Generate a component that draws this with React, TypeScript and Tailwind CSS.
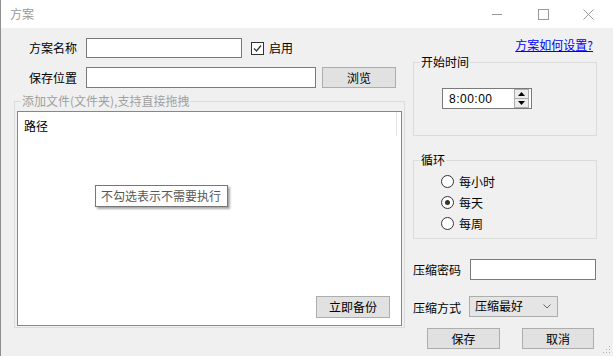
import React from 'react';

function GroupBox({ label, className, labelClass, children }: { label: string; className: string; labelClass?: string; children: React.ReactNode }) {
  return (
    <div className={`relative border border-[#dcdcdc] ${className}`}>
      <span className={`absolute top-[-9px] left-[6px] bg-[#f0f0f0] px-[1px] leading-[16px] ${labelClass ?? 'text-black'}`}>{label}</span>
      {children}
    </div>
  );
}

function Radio({ label, checked }: { label: string; checked?: boolean }) {
  return (
    <div className="flex items-center h-[21px]">
      <span className="w-[13px] h-[13px] rounded-full border border-[#333] bg-white flex items-center justify-center">
        {checked && <span className="w-[5px] h-[5px] rounded-full bg-[#333]" />}
      </span>
      <span className="ml-[5px]">{label}</span>
    </div>
  );
}

function WinButton({ label, className }: { label: string; className: string }) {
  return (
    <div className={`h-[21px] bg-[#e1e1e1] border border-[#adadad] flex items-center justify-center ${className}`}>{label}</div>
  );
}

export default function App() {
  return (
    <div className="relative w-[613px] h-[356px] bg-[#f0f0f0] border-l border-[#8f8f8f] flex flex-col text-[12px] leading-[16px] text-black font-['Noto_Sans_CJK_SC','Microsoft_YaHei',sans-serif] overflow-hidden">
      {/* Title bar */}
      <div className="h-[28px] bg-white flex items-center shrink-0">
        <span className="ml-[9px] text-[#999]">方案</span>
        <div className="ml-auto flex items-center text-[#999]">
          <svg width="10" height="10" viewBox="0 0 10 10" className="mr-[36px]">
            <line x1="0" y1="5.5" x2="10" y2="5.5" stroke="#999" strokeWidth="1" />
          </svg>
          <svg width="11" height="11" viewBox="0 0 11 11" className="mr-[34px]">
            <rect x="0.5" y="0.5" width="10" height="10" fill="none" stroke="#999" strokeWidth="1" />
          </svg>
          <svg width="11" height="11" viewBox="0 0 11 11" className="mr-[19px]">
            <line x1="0.5" y1="0.5" x2="10.5" y2="10.5" stroke="#999" strokeWidth="1" />
            <line x1="10.5" y1="0.5" x2="0.5" y2="10.5" stroke="#999" strokeWidth="1" />
          </svg>
        </div>
      </div>

      <div className="flex flex-1">
        {/* Left column */}
        <div className="w-[412px] pt-[10px] flex flex-col">
          <div className="flex items-center h-[20px] pl-[28px]">
            <span className="w-[57px]">方案名称</span>
            <div className="w-[156px] h-[20px] bg-white border border-[#7a7a7a]" />
            <span className="ml-[9px] w-[13px] h-[13px] border border-[#333] bg-white flex items-center justify-center">
              <svg width="11" height="11" viewBox="0 0 11 11">
                <polyline points="2,5.5 4.5,8 9,2.5" fill="none" stroke="#333" strokeWidth="1.2" />
              </svg>
            </span>
            <span className="ml-[5px]">启用</span>
          </div>
          <div className="flex items-center h-[21px] pl-[28px] mt-[9px]">
            <span className="w-[57px]">保存位置</span>
            <div className="w-[230px] h-[21px] bg-white border border-[#7a7a7a]" />
            <WinButton label="浏览" className="ml-[6px] w-[74px]" />
          </div>

          <GroupBox label="添加文件(文件夹),支持直接拖拽" labelClass="text-[#a0a0a0]" className="ml-[13px] mt-[13px] w-[391px] h-[227px] pt-[9px] px-[2px] pb-[1px] flex flex-col">
            <div className="relative flex-1 bg-white border border-[#828790] flex flex-col">
              <div className="flex h-[24px]">
                <div className="w-[379px] border-r border-[#e5e5e5] pl-[6px] pt-[6px] leading-[16px]">路径</div>
              </div>
              <div className="flex-1" />
              <div className="flex justify-end pr-[11px] pb-[7px]">
                <WinButton label="立即备份" className="w-[74px] h-[22px]" />
              </div>
              <div className="absolute left-[77px] top-[73px] w-[133px] h-[22px] bg-white border border-[#767676] shadow-[2px_2px_2px_rgba(0,0,0,0.35)] pl-[5px] flex items-center text-[#575757]">
                不勾选表示不需要执行
              </div>
            </div>
          </GroupBox>
        </div>

        {/* Right column */}
        <div className="w-[184px] pt-[10px] flex flex-col">
          <div className="h-[14px] leading-[14px] text-right pr-[4px]">
            <span className="text-[#0000ff] underline">方案如何设置?</span>
          </div>

          <GroupBox label="开始时间" className="mt-[10px] h-[74px] pt-[25px] pl-[28px]">
            <div className="w-[90px] h-[21px] bg-white border border-[#7a7a7a] flex items-center">
              <span className="ml-[6px] font-['Liberation_Sans',sans-serif] tracking-[0.5px]">8:00:00</span>
              <div className="ml-auto mr-[2px] w-[15px] h-[19px] flex flex-col">
                <div className="flex-1 bg-[#ececec] border border-[#adadad] flex items-center justify-center">
                  <svg width="7" height="4" viewBox="0 0 7 4"><polygon points="0,4 3.5,0 7,4" fill="#000" /></svg>
                </div>
                <div className="flex-1 bg-[#ececec] border border-t-0 border-[#adadad] flex items-center justify-center">
                  <svg width="7" height="4" viewBox="0 0 7 4"><polygon points="0,0 3.5,4 7,0" fill="#000" /></svg>
                </div>
              </div>
            </div>
          </GroupBox>

          <GroupBox label="循环" className="mt-[24px] h-[79px] pt-[10px] pl-[27px]">
            <Radio label="每小时" />
            <Radio label="每天" checked />
            <Radio label="每周" />
          </GroupBox>

          <div className="flex items-center h-[21px] mt-[20px]">
            <span className="w-[57px]">压缩密码</span>
            <div className="w-[126px] h-[21px] bg-white border border-[#7a7a7a]" />
          </div>

          <div className="flex items-center h-[20px] mt-[16px]">
            <span className="w-[56px] pt-[3px]">压缩方式</span>
            <div className="w-[89px] h-[21px] bg-[#e5e5e5] border border-[#adadad] flex items-center">
              <span className="ml-[5px]">压缩最好</span>
              <svg width="8" height="5" viewBox="0 0 8 5" className="ml-auto mr-[6px]">
                <polyline points="0.5,0.5 4,4 7.5,0.5" fill="none" stroke="#666" strokeWidth="1" />
              </svg>
            </div>
          </div>

          <div className="flex mt-[12px]">
            <WinButton label="保存" className="ml-[14px] w-[73px]" />
            <WinButton label="取消" className="ml-[22px] w-[72px]" />
          </div>
        </div>
      </div>

      {/* Resize grip */}
      <svg width="10" height="10" viewBox="0 0 10 10" className="absolute right-[2px] bottom-[2px]">
        <rect x="8" y="2" width="1" height="1" fill="#b0b0b0" />
        <rect x="5" y="5" width="1" height="1" fill="#b0b0b0" />
        <rect x="8" y="5" width="1" height="1" fill="#b0b0b0" />
        <rect x="2" y="8" width="1" height="1" fill="#b0b0b0" />
        <rect x="5" y="8" width="1" height="1" fill="#b0b0b0" />
        <rect x="8" y="8" width="1" height="1" fill="#b0b0b0" />
      </svg>
    </div>
  );
}
